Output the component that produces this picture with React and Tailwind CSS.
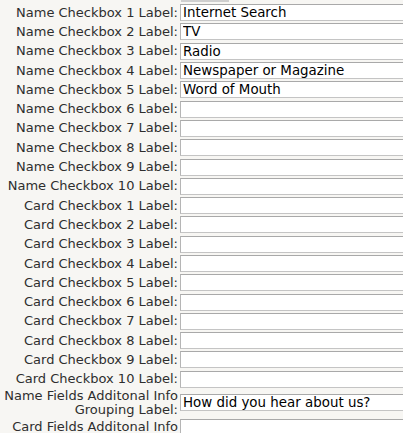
const nameValues = ["Internet Search", "TV", "Radio", "Newspaper or Magazine", "Word of Mouth"];

const rows = [
  ...Array.from({ length: 10 }, (_, i) => ({
    label: `Name Checkbox ${i + 1} Label:`,
    value: nameValues[i] || "",
  })),
  ...Array.from({ length: 10 }, (_, i) => ({
    label: `Card Checkbox ${i + 1} Label:`,
    value: "",
  })),
];

function TextBox({ value }) {
  return (
    <input
      type="text"
      defaultValue={value}
      className="h-[17px] w-[260px] border border-[#c4c4c4] border-t-[#a9a9a9] border-l-[#b5b5b5] bg-white px-[2px] text-[13.4px] leading-[15px] text-black outline-none"
      style={{ fontFamily: '"DejaVu Sans", Verdana, sans-serif' }}
    />
  );
}

export default function App() {
  return (
    <div
      className="h-[433px] w-[403px] overflow-hidden bg-[#f7f6f3] text-[13px] text-[#2e2e2e]"
      style={{ fontFamily: '"DejaVu Sans", Verdana, sans-serif' }}
    >
      <div className="ml-[181px] h-[2px] w-[48px] bg-[#cfcfcf]" />
      <div className="mt-[1px] grid grid-cols-[180px_1fr] auto-rows-[19.3px] items-center">
        {rows.map((r) => (
          <div key={r.label} className="contents">
            <div className="whitespace-nowrap pr-[2px] text-right leading-[14px]">{r.label}</div>
            <div className="flex items-center">
              <TextBox value={r.value} />
            </div>
          </div>
        ))}
      </div>
      <div className="grid grid-cols-[180px_1fr] items-center">
        <div className="whitespace-nowrap pr-[2px] text-right leading-[14px]">
          Name Fields Additonal Info
          <br />
          Grouping Label:
        </div>
        <div className="flex items-center">
          <TextBox value="How did you hear about us?" />
        </div>
        <div className="whitespace-nowrap pr-[2px] pt-[1px] text-right leading-[14px]">Card Fields Additonal Info</div>
        <div className="flex items-start pt-[2px]">
          <TextBox value="" />
        </div>
      </div>
    </div>
  );
}
